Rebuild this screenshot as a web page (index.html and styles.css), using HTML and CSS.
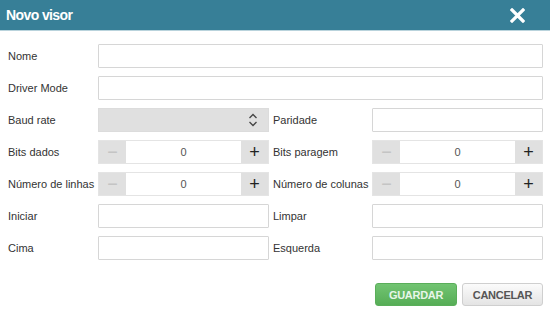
FILE: index.html
```html
<!DOCTYPE html>
<html>
<head>
    <title>Novo visor</title>
    <link rel="stylesheet" href="styles.css">
</head>
<body>
    <div class="dialog">
        <div class="dialog-header">
            <span class="dialog-title">Novo visor</span>
            <span class="dialog-close">
                <svg width="15" height="15" viewBox="0 0 15 15"><path d="M2 2 L13 13 M13 2 L2 13" stroke="#fff" stroke-width="3.2" stroke-linecap="square"/></svg>
            </span>
        </div>
        <form class="dialog-body">
            <label class="field-label">Nome</label>
            <input class="field wide" type="text">

            <label class="field-label">Driver Mode</label>
            <input class="field wide" type="text">

            <label class="field-label">Baud rate</label>
            <div class="select">
                <svg width="10" height="14" viewBox="0 0 10 14"><path d="M1.5 5 L5 1.5 L8.5 5 M1.5 9 L5 12.5 L8.5 9" fill="none" stroke="#444" stroke-width="1.3"/></svg>
            </div>
            <label class="field-label right">Paridade</label>
            <input class="field" type="text">

            <label class="field-label">Bits dados</label>
            <div class="stepper">
                <span class="step minus">&minus;</span>
                <span class="step-value">0</span>
                <span class="step plus">+</span>
            </div>
            <label class="field-label right">Bits paragem</label>
            <div class="stepper">
                <span class="step minus">&minus;</span>
                <span class="step-value">0</span>
                <span class="step plus">+</span>
            </div>

            <label class="field-label">Número de linhas</label>
            <div class="stepper">
                <span class="step minus">&minus;</span>
                <span class="step-value">0</span>
                <span class="step plus">+</span>
            </div>
            <label class="field-label right">Número de colunas</label>
            <div class="stepper">
                <span class="step minus">&minus;</span>
                <span class="step-value">0</span>
                <span class="step plus">+</span>
            </div>

            <label class="field-label">Iniciar</label>
            <input class="field" type="text">
            <label class="field-label right">Limpar</label>
            <input class="field" type="text">

            <label class="field-label">Cima</label>
            <input class="field" type="text">
            <label class="field-label right">Esquerda</label>
            <input class="field" type="text">

            <div class="actions">
                <button type="button" class="btn btn-save">GUARDAR</button>
                <button type="button" class="btn btn-cancel">CANCELAR</button>
            </div>
        </form>
    </div>
</body>
</html>
```

FILE: styles.css
```css
body {
    margin: 0;
    background-color: white;
    font-family: "Liberation Sans", Arial, sans-serif;
    color: #333;
}

.dialog {
    width: 550px;
    height: 315px;
}

.dialog-header {
    height: 30px;
    background-color: #377f97;
    border-bottom: 1px solid #b9d3dc;
    display: flex;
    align-items: center;
    justify-content: space-between;
    padding: 0 25px 0 6px;
}

.dialog-title {
    color: white;
    font-size: 14px;
    font-weight: bold;
    letter-spacing: -0.6px;
}

.dialog-close {
    display: flex;
    padding-top: 1px;
}

.dialog-body {
    display: grid;
    grid-template-columns: 90px 171px 103px 171px;
    grid-auto-rows: 24px;
    row-gap: 8px;
    padding: 13px 7px 0 8px;
    margin: 0;
}

.field-label {
    font-size: 11px;
    display: flex;
    align-items: center;
    white-space: nowrap;
    color: #333;
}

.field-label.right {
    padding-left: 4px;
}

.field {
    box-sizing: border-box;
    height: 24px;
    border: 1px solid #d6d6d6;
    border-radius: 1px;
    background: white;
    margin: 0;
}

.field.wide {
    grid-column: 2 / 5;
}

.select {
    box-sizing: border-box;
    border: 1px solid #dcdcdc;
    background-color: #e0e0e0;
    display: flex;
    align-items: center;
    justify-content: flex-end;
    padding-right: 10px;
}

.stepper {
    display: flex;
    border: 1px solid #e4e4e4;
    box-sizing: border-box;
}

.step {
    width: 27px;
    background-color: #e0e0e0;
    display: flex;
    align-items: center;
    justify-content: center;
    font-size: 18px;
    font-weight: 300;
}

.step.minus {
    color: #c4c4c4;
}

.step.plus {
    color: #222;
}

.step-value {
    flex: 1;
    display: flex;
    align-items: center;
    justify-content: center;
    font-size: 11px;
    color: #555;
    background: white;
}

.actions {
    grid-column: 1 / 5;
    display: flex;
    justify-content: flex-end;
    gap: 5px;
    margin-top: 15px;
    height: 23px;
}

.btn {
    box-sizing: border-box;
    height: 23px;
    border-radius: 3px;
    font-family: "Liberation Sans", Arial, sans-serif;
    font-size: 11px;
    font-weight: bold;
    letter-spacing: -0.3px;
    padding: 0;
    cursor: pointer;
}

.btn-save {
    width: 82px;
    color: #e8f5e8;
    background: linear-gradient(#72c472, #56ad56);
    border: 1px solid #5aae5a;
}

.btn-cancel {
    width: 81px;
    color: #555;
    background: linear-gradient(#fbfbfb, #e4e4e4);
    border: 1px solid #cfcfcf;
}
```
